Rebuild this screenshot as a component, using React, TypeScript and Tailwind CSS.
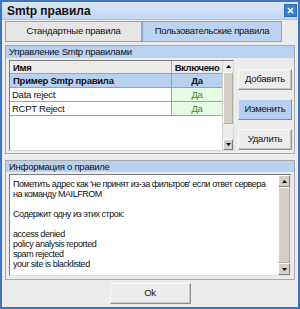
export default function App() {
  const font = { fontFamily: '"Liberation Sans", Arial, sans-serif' }
  const btn =
    'h-[21px] bg-[#ececec] border border-[#909090] border-t-[#f8f8f8] border-l-[#f8f8f8] shadow-[inset_-1px_-1px_0_#c4c4c4]'
  return (
    <div
      style={font}
      className="w-[300px] h-[309px] border-[2px] border-[#3f74c4] bg-[#ececec] flex flex-col text-[9.5px] tracking-[-0.25px] text-[#111] overflow-hidden"
    >
      {/* title bar */}
      <div className="h-[18px] shrink-0 flex items-center justify-between bg-gradient-to-b from-[#dbe7f7] to-[#c2d6f0] pl-[5px] pr-[1px] border-b border-[#aac2e2]">
        <span className="font-bold text-[12px] tracking-normal">Smtp правила</span>
        <div className="w-[13px] h-[13px] bg-[#3a7fd6] border border-[#2d6bbb] flex items-center justify-center">
          <svg width="7" height="7" viewBox="0 0 7 7">
            <path d="M1 1L6 6M6 1L1 6" stroke="white" strokeWidth="1.6" />
          </svg>
        </div>
      </div>

      {/* tabs */}
      <div className="flex shrink-0 pl-[3px] pt-[1px] h-[22px]">
        <div className="w-[137px] h-[21px] border border-[#a0a0a0] bg-[#e6e6e6] flex items-center justify-center">
          Стандартные правила
        </div>
        <div className="w-[140px] h-[21px] border border-[#8ca6c8] bg-[#bcd3f1] flex items-center justify-center">
          Пользовательские правила
        </div>
      </div>

      {/* group 1 */}
      <div className="mx-[3px] mt-[3px] shrink-0 border border-[#a8a8a8] bg-[#ececec]">
        <div className="h-[12px] bg-[#b9d2f2] flex items-center pl-[3px] leading-none">
          Управление Smtp правилами
        </div>
        <div className="flex pl-[3px] pt-[2px] pb-[2px] gap-[4px]">
          <div className="w-[225px] h-[91px] border border-[#7a7a7a] border-r-[#d8d8d8] border-b-[#d8d8d8] bg-white flex">
            <div className="flex-1 flex flex-col">
              <div className="flex h-[13px] bg-[#ececec] border-b border-[#a0a0a0] font-bold">
                <div className="flex-1 pl-[3px] border-r border-[#a0a0a0] leading-[13px]">Имя</div>
                <div className="w-[50px] text-center leading-[13px] tracking-[-0.4px] whitespace-nowrap">Включено</div>
              </div>
              <div className="flex h-[14px] bg-[#b8d1f1] border-b border-[#a0a0a0] font-bold">
                <div className="flex-1 pl-[3px] border-r border-[#a0a0a0] leading-[13px]">Пример Smtp правила</div>
                <div className="w-[50px] text-center leading-[13px]">Да</div>
              </div>
              {['Data reject', 'RCPT Reject'].map((n) => (
                <div key={n} className="flex h-[14px] border-b border-[#a0a0a0]">
                  <div className="flex-1 pl-[2px] border-r border-[#a0a0a0] leading-[13px] bg-white">{n}</div>
                  <div className="w-[50px] text-center leading-[13px] bg-[#e6fbe3] text-[#3a8a2a]">Да</div>
                </div>
              ))}
            </div>
            <div className="w-[11px] flex flex-col bg-[#ececec] border-l border-[#d0d0d0]">
              <div className="h-[11px] flex items-center justify-center">
                <svg width="5" height="3" viewBox="0 0 5 3"><path d="M2.5 0L5 3H0z" fill="black" /></svg>
              </div>
              <div className="h-[52px] bg-[#d4d0c8] border border-[#b0aca4] border-t-white border-l-white" />
              <div className="flex-1" />
              <div className="h-[11px] flex items-center justify-center bg-[#d4d0c8] border border-[#808080] border-t-white border-l-white">
                <svg width="5" height="3" viewBox="0 0 5 3"><path d="M0 0H5L2.5 3z" fill="black" /></svg>
              </div>
            </div>
          </div>
          <div className="flex flex-col gap-[9px] pt-[9px]">
            <button className={`w-[54px] ${btn}`}>Добавить</button>
            <button className="w-[54px] h-[21px] bg-[#b6cff0] border border-[#7a8ea8] border-t-[#e4eefb] border-l-[#e4eefb]">
              Изменить
            </button>
            <button className={`w-[54px] ${btn}`}>Удалить</button>
          </div>
        </div>
      </div>

      {/* group 2 */}
      <div className="mx-[3px] mt-[6px] shrink-0 border border-[#a8a8a8] bg-[#ececec]">
        <div className="h-[11px] bg-[#b9d2f2] flex items-center pl-[3px] leading-none">
          Информация о правиле
        </div>
        <div className="p-[3px] pt-[2px]">
          <div className="h-[102px] border border-[#7a7a7a] border-r-[#e0e0e0] border-b-[#e0e0e0] bg-white flex">
            <div className="flex-1 min-w-0 pl-[3px] pt-[4px] leading-[10px] whitespace-pre text-[9px] tracking-[-0.45px] overflow-hidden">
              {"Пометить адрес как 'не принят из-за фильтров' если ответ сервера\nна команду MAILFROM\n\nСодержит одну из этих строк:\n\naccess denied\npolicy analysis reported\nspam rejected\nyour site is blacklisted"}
            </div>
            <div className="w-[12px] shrink-0 flex flex-col bg-[#ececec]">
              <div className="h-[12px] flex items-center justify-center bg-[#d4d0c8] border border-[#808080] border-t-white border-l-white">
                <svg width="5" height="3" viewBox="0 0 5 3"><path d="M2.5 0L5 3H0z" fill="black" /></svg>
              </div>
              <div className="flex-1 bg-[#d4d0c8] border border-[#b0aca4] border-t-white border-l-white" />
              <div className="h-[12px] flex items-center justify-center bg-[#d4d0c8] border border-[#808080] border-t-white border-l-white">
                <svg width="5" height="3" viewBox="0 0 5 3"><path d="M0 0H5L2.5 3z" fill="black" /></svg>
              </div>
            </div>
          </div>
        </div>
      </div>

      {/* footer */}
      <div className="flex-1 flex items-center justify-center">
        <button className={`w-[81px] ${btn} h-[19px]`}>Ok</button>
      </div>
    </div>
  )
}
